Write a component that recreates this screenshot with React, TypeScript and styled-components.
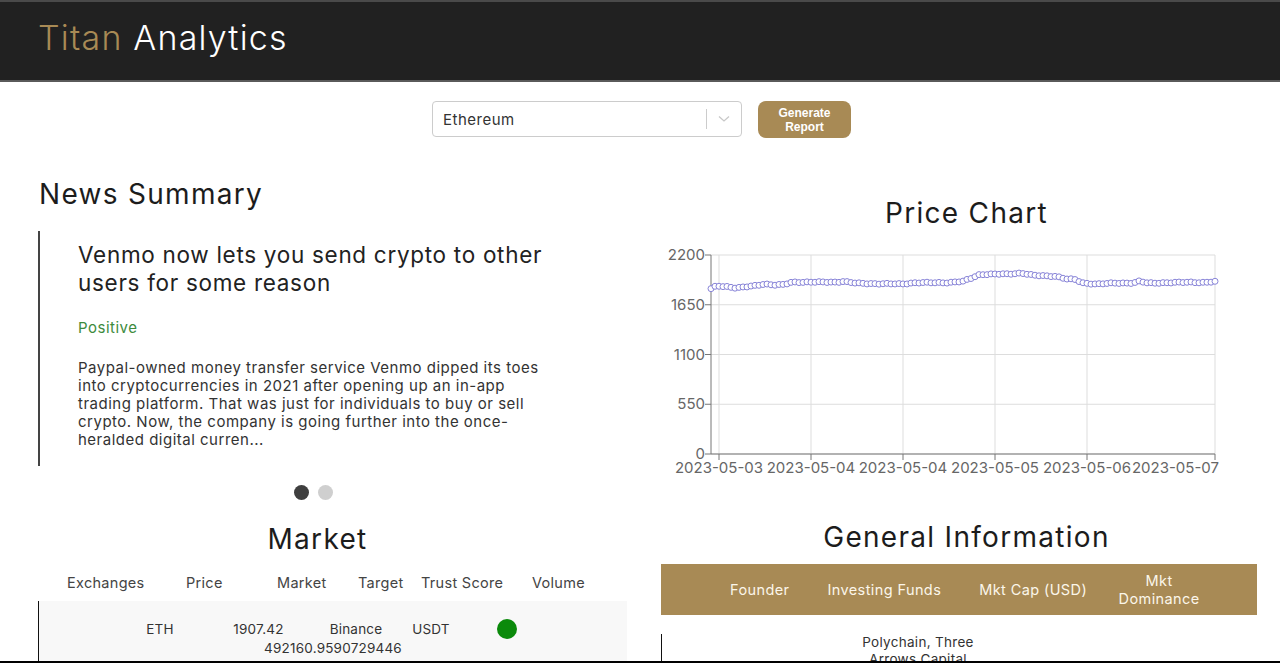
import React from "react";
import styled, { createGlobalStyle } from "styled-components";

const GlobalStyle = createGlobalStyle`
  html, body {
    margin: 0;
    padding: 0;
    background: #ffffff;
    font-family: "Inter", "Open Sans", sans-serif;
    color: #222;
    overflow: hidden;
  }
  * { box-sizing: border-box; }
`;

const GOLD = "#a88a55";
const FONT = `"Inter", "Open Sans", sans-serif`;

const Header = styled.header`
  height: 82px;
  background: #212121;
  border-top: 2px solid #4a4a4a;
  border-bottom: 2px solid #5a5a5a;
  display: flex;
  align-items: center;
  padding: 0 0 7px 38px;
`;

const Brand = styled.h1`
  margin: 0;
  font-family: ${FONT};
  font-weight: 300;
  font-size: 34px;
  letter-spacing: 1.2px;
  color: #ffffff;
  span { color: ${GOLD}; }
`;

const Controls = styled.div`
  display: flex;
  justify-content: center;
  align-items: flex-start;
  gap: 16px;
  padding-top: 19px;
  padding-left: 3px;
`;

const Select = styled.div`
  width: 310px;
  height: 36px;
  border: 1px solid #cccccc;
  border-radius: 4px;
  display: flex;
  align-items: center;
  font-size: 15px;
  letter-spacing: 0.5px;
  color: #333;
  padding-left: 10px;
`;

const SelectValue = styled.div`
  flex: 1;
`;

const Separator = styled.div`
  width: 1px;
  height: 20px;
  background: #cccccc;
`;

const Chevron = styled.div`
  width: 34px;
  display: flex;
  justify-content: center;
  align-items: center;
`;

const GenerateButton = styled.button`
  width: 93px;
  height: 37px;
  background: ${GOLD};
  border: none;
  border-radius: 8px;
  color: #fff;
  font-family: "Liberation Sans", Arial, sans-serif;
  font-size: 12px;
  font-weight: 700;
  line-height: 14px;
  padding: 0 8px;
`;

const Main = styled.main`
  display: grid;
  grid-template-columns: 619px 627px;
  column-gap: 26px;
  padding-left: 8px;
  margin-top: 22px;
`;

const Column = styled.section<{ $top: number }>`
  padding-top: ${(p) => p.$top}px;
`;

const SectionTitle = styled.h2<{ $align?: string; $pad?: number }>`
  margin: 0;
  font-family: ${FONT};
  font-weight: 400;
  font-size: 28px;
  line-height: 34px;
  letter-spacing: 1.3px;
  color: #1c1c1c;
  text-align: ${(p) => p.$align || "center"};
  padding-left: ${(p) => p.$pad || 0}px;
`;

const NewsCard = styled.article`
  margin: 20px 0 0 30px;
  border-left: 2px solid #444;
  padding: 10px 72px 17px 38px;
`;

const NewsHeadline = styled.h3`
  margin: 0;
  font-weight: 400;
  font-size: 22.5px;
  line-height: 28px;
  letter-spacing: 0.7px;
  color: #222;
`;

const Sentiment = styled.div`
  margin-top: 21px;
  font-size: 15px;
  letter-spacing: 0.5px;
  color: #3d8b3d;
`;

const NewsBody = styled.p`
  margin: 22px 0 0;
  font-size: 15px;
  line-height: 18px;
  letter-spacing: 0.5px;
  color: #333;
`;

const Dots = styled.div`
  display: flex;
  justify-content: center;
  gap: 9px;
  margin-top: 19px;
  padding-right: 8px;
`;

const Dot = styled.span<{ $active?: boolean }>`
  width: 15px;
  height: 15px;
  border-radius: 50%;
  background: ${(p) => (p.$active ? "#3f3f3f" : "#cfcfcf")};
`;

const MarketTitle = styled(SectionTitle)`
  margin-top: 22px;
`;

const MarketTable = styled.div`
  margin: 18px 0 0 30px;
`;

const MarketHead = styled.div`
  display: grid;
  grid-template-columns: 119px 91px 81px 63px 111px 1fr;
  padding-left: 29px;
  font-size: 14.5px;
  letter-spacing: 0.3px;
  color: #444;
  line-height: 18px;
`;

const MarketRow = styled.div`
  margin-top: 9px;
  background: #f8f8f8;
  border-left: 1px solid #111;
  padding: 18px 60px 10px;
  display: flex;
  flex-wrap: wrap;
  justify-content: center;
  align-items: center;
  font-size: 13.5px;
  letter-spacing: 0.2px;
  color: #333;
  line-height: 18px;
`;

const MarketCell = styled.span<{ $w: number }>`
  width: ${(p) => p.$w}px;
  display: flex;
  justify-content: center;
`;

const TrustDot = styled.span`
  width: 20px;
  height: 20px;
  border-radius: 50%;
  background: #0b8a0b;
`;

const ChartBox = styled.div`
  margin-top: 0;
`;

const InfoTitle = styled(SectionTitle)`
  margin-top: 40px;
`;

const InfoHead = styled.div`
  margin: 10px 23px 0 8px;
  height: 51px;
  background: ${GOLD};
  display: flex;
  align-items: center;
  padding-left: 69px;
  gap: 38px;
  font-size: 14.5px;
  letter-spacing: 0.4px;
  color: #fbf6ea;
  line-height: 18px;
`;

const InfoHeadCell = styled.div<{ $w?: number; $shift?: number }>`
  width: ${(p) => (p.$w ? `${p.$w}px` : "auto")};
  margin-left: ${(p) => p.$shift || 0}px;
  text-align: center;
`;

const InfoRow = styled.div`
  margin: 19px 23px 0 8px;
  border-left: 1px solid #111;
  padding: 0 0 0 196px;
  font-size: 13.5px;
  line-height: 17px;
  letter-spacing: 0.3px;
  color: #333;
`;

const InfoCell = styled.div`
  width: 120px;
  text-align: center;
`;

const Frame = styled.div`
  position: fixed;
  left: 0;
  right: 0;
  bottom: 0;
  height: 2px;
  background: #000;
`;

// price data, hourly-ish, 127 samples
const keys: [number, number][] = [
  [0, 1826], [2, 1858], [6, 1850], [9, 1836], [12, 1845], [16, 1862], [19, 1880],
  [23, 1868], [26, 1872], [29, 1900], [45, 1900], [47, 1908], [52, 1888], [60, 1882],
  [68, 1880], [73, 1893], [85, 1895], [90, 1908], [93, 1945], [96, 1985],
  [106, 1990], [111, 2000], [115, 1975], [123, 1965], [127, 1935], [130, 1928],
  [133, 1890], [138, 1878], [144, 1890], [151, 1890], [153, 1910], [156, 1890],
  [166, 1895], [171, 1900], [176, 1895], [180, 1905],
].map(([i, v]) => [(i * 126) / 180, v]);

const prices = Array.from({ length: 127 }, (_, i) => {
  let v = keys[keys.length - 1][1];
  for (let k = 0; k < keys.length - 1; k++) {
    const [x0, y0] = keys[k];
    const [x1, y1] = keys[k + 1];
    if (i >= x0 && i <= x1) {
      v = y0 + ((y1 - y0) * (i - x0)) / (x1 - x0 || 1);
      break;
    }
  }
  return v + 4 * Math.sin(i * 1.9) + 2 * Math.cos(i * 0.7);
});

const PriceChart = () => {
  const left = 58;
  const right = 562;
  const top = 25;
  const bottom = 224;
  const sy = (v: number) => bottom - (v / 2200) * (bottom - top);
  const sx = (i: number) => left + i * 4;
  const yTicks = [0, 550, 1100, 1650, 2200];
  const xTicks: [number, string][] = [
    [66, "2023-05-03"],
    [158, "2023-05-04"],
    [250, "2023-05-04"],
    [342, "2023-05-05"],
    [434, "2023-05-06"],
    [562, "2023-05-07"],
  ];
  const line = prices.map((v, i) => `${i ? "L" : "M"}${sx(i)},${sy(v).toFixed(1)}`).join(" ");
  return (
    <svg width="627" height="250" style={{ display: "block" }} fontFamily={FONT}>
      {yTicks.map((t) => (
        <line key={t} x1={left} x2={right} y1={sy(t)} y2={sy(t)} stroke="#dddddd" />
      ))}
      {xTicks.map(([x], k) => (
        <line key={k} x1={x} x2={x} y1={top} y2={bottom} stroke="#dddddd" />
      ))}
      <line x1={left} x2={left} y1={top} y2={bottom} stroke="#777" />
      <line x1={left} x2={right} y1={bottom} y2={bottom} stroke="#777" />
      {yTicks.map((t) => (
        <g key={t}>
          <line x1={left - 6} x2={left} y1={sy(t)} y2={sy(t)} stroke="#777" />
          <text x={left - 6} y={sy(t) + 5} textAnchor="end" fontSize="15" fill="#666">
            {t}
          </text>
        </g>
      ))}
      {xTicks.map(([x, label], k) => (
        <g key={k}>
          <line x1={x} x2={x} y1={bottom} y2={bottom + 6} stroke="#777" />
          <text
            x={k === xTicks.length - 1 ? x + 4 : x}
            y={bottom + 19}
            textAnchor={k === xTicks.length - 1 ? "end" : "middle"}
            fontSize="15"
            fill="#666"
          >
            {label}
          </text>
        </g>
      ))}
      <path d={line} fill="none" stroke="#8884d8" strokeWidth="1" />
      {prices.map((v, i) => (
        <circle key={i} cx={sx(i)} cy={sy(v)} r="3" fill="#fff" stroke="#8884d8" strokeWidth="1" />
      ))}
    </svg>
  );
};

export default function App() {
  return (
    <>
      <GlobalStyle />
      <Header>
        <Brand>
          <span>Titan</span> Analytics
        </Brand>
      </Header>
      <Controls>
        <Select>
          <SelectValue>Ethereum</SelectValue>
          <Separator />
          <Chevron>
            <svg width="12" height="8" viewBox="0 0 12 8">
              <path d="M1 1.5 L6 6 L11 1.5" fill="none" stroke="#c8c8c8" strokeWidth="1.3" />
            </svg>
          </Chevron>
        </Select>
        <GenerateButton>Generate Report</GenerateButton>
      </Controls>
      <Main>
        <Column $top={17}>
          <SectionTitle $align="left" $pad={31}>
            News Summary
          </SectionTitle>
          <NewsCard>
            <NewsHeadline>Venmo now lets you send crypto to other users for some reason</NewsHeadline>
            <Sentiment>Positive</Sentiment>
            <NewsBody>
              Paypal-owned money transfer service Venmo dipped its toes into cryptocurrencies in 2021 after
              opening up an in-app trading platform. That was just for individuals to buy or sell crypto. Now,
              the company is going further into the once-heralded digital curren...
            </NewsBody>
          </NewsCard>
          <Dots>
            <Dot $active />
            <Dot />
          </Dots>
          <MarketTitle>Market</MarketTitle>
          <MarketTable>
            <MarketHead>
              <span>Exchanges</span>
              <span>Price</span>
              <span>Market</span>
              <span>Target</span>
              <span>Trust Score</span>
              <span>Volume</span>
            </MarketHead>
            <MarketRow>
              <MarketCell $w={97}>ETH</MarketCell>
              <MarketCell $w={100}>1907.42</MarketCell>
              <MarketCell $w={95}>Binance</MarketCell>
              <MarketCell $w={55}>USDT</MarketCell>
              <MarketCell $w={96}>
                <TrustDot />
              </MarketCell>
              <MarketCell $w={180}>492160.9590729446</MarketCell>
            </MarketRow>
          </MarketTable>
        </Column>
        <Column $top={36}>
          <SectionTitle>Price Chart</SectionTitle>
          <ChartBox>
            <PriceChart />
          </ChartBox>
          <InfoTitle>General Information</InfoTitle>
          <InfoHead>
            <InfoHeadCell>Founder</InfoHeadCell>
            <InfoHeadCell>Investing Funds</InfoHeadCell>
            <InfoHeadCell>Mkt Cap (USD)</InfoHeadCell>
            <InfoHeadCell $w={90} $shift={-11}>
              Mkt Dominance
            </InfoHeadCell>
          </InfoHead>
          <InfoRow>
            <InfoCell>Polychain, Three Arrows Capital</InfoCell>
          </InfoRow>
        </Column>
      </Main>
      <Frame />
    </>
  );
}
